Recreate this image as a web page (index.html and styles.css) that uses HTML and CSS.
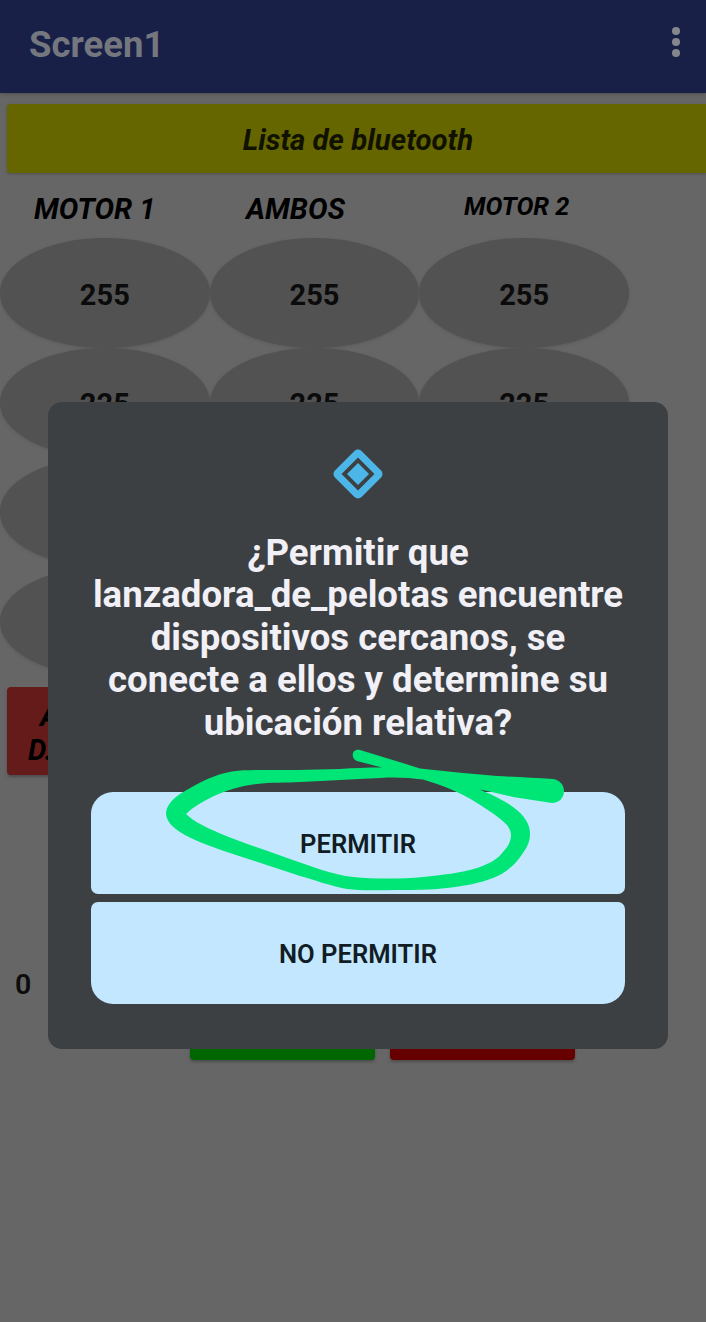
FILE: index.html
```html
<!DOCTYPE html>
<html lang="es">
<head>
<meta charset="utf-8">
<title>Screen1</title>
<link rel="stylesheet" href="styles.css">
</head>
<body>
<div class="screen">
  <header class="appbar">
    <h1 class="appbar-title">Screen1</h1>
    <svg class="menu" width="10" height="32" viewBox="0 0 10 32"><circle cx="5" cy="5" r="4"/><circle cx="5" cy="16" r="4"/><circle cx="5" cy="27" r="4"/></svg>
  </header>
  <main class="content">
    <div class="list-button">Lista de bluetooth</div>
    <div class="labels"><span class="label-one">MOTOR 1</span><span class="label-both">AMBOS</span><span class="label-two">MOTOR 2</span></div>
    <div class="speeds">
      <div class="oval">255</div><div class="oval">255</div><div class="oval">255</div>
      <div class="oval">225</div><div class="oval">225</div><div class="oval">225</div>
      <div class="oval"></div><div class="oval"></div><div class="oval"></div>
      <div class="oval"></div><div class="oval"></div><div class="oval"></div>
    </div>
    <div class="stop"><span class="stop-top">A</span><span>D.</span></div>
    <div class="counter">0</div>
    <div class="actions"><div class="action go"></div><div class="action halt"></div></div>
  </main>

  <section class="dialog">
    <svg class="dialog-icon" width="50" height="50" viewBox="0 0 50 50">
      <path d="M25 5.5 44.5 25 25 44.5 5.5 25Z" fill="none" stroke="#4db6e8" stroke-width="10" stroke-linejoin="round"/>
      <path d="M25 8.5 41.5 25 25 41.5 8.5 25Z" fill="#3d4043"/>
      <path d="M25 14 36 25 25 36 14 25Z" fill="#4db6e8"/>
    </svg>
    <h2 class="question">¿Permitir que<br>lanzadora_de_pelotas encuentre<br>dispositivos cercanos, se<br>conecte a ellos y determine su<br>ubicación relativa?</h2>
    <div class="choices">
      <div class="choice allow">PERMITIR</div>
      <div class="choice deny">NO PERMITIR</div>
    </div>
  </section>

  <svg class="marker" width="706" height="1322" viewBox="0 0 706 1322">
    <path fill="#00e676" d="M360 750 C380 756 400 762 420 768.5 C445 771 470 774 497 776 C515 777 535 778 553 779 C560 780 564 785 564 791 C564 798 559 803 552 803 C539 801 526 799 513 797 C500 794 489 791 474 788.5 C478 789 481 790 483 791 C495 796 505 801 513 807 C525 816 530 824 530 834 C530 842 527 847 523 853 C516 864 506 873 493 878 C480 883 465 886 447 888 C430 890 414 890 397 890 C380 890 362 891 347 889 C330 886 315 880 300 876 C275 868 252 860 230 853 C212 847 192 840 180 832 C171 826 166 820 166 813 C167 804 174 797 185 791 C200 782 216 774 232 771.5 C240 770 247 770.3 255 770 C285 770 310 770 340 769 C354 768 367 767.5 382 767.5 L357 761 C350 758 352 748 360 750Z M423 779.5 C410 778 396 777 380 778 C350 779 330 781 300 782 C285 783 270 782 257 784 C240 786 225 791 212 797 C202 802 193 807 186 814 C194 822 206 827 219 833 C242 843 266 850 290 859 C311 866 333 875 353 877 C375 879 401 879 423 877 C442 875 461 873 477 868 C489 864 498 859 503 852 C508 847 511 841 511 835 C511 831 509 828 507 825 C498 816 488 810 477 803 C460 792 442 785 423 779.5Z"/>
  </svg>
</div>
</body>
</html>
```
FILE: styles.css
```css
* { box-sizing: border-box; }
body { margin: 0; font-family: Roboto, "Liberation Sans", sans-serif; }
.screen { position: relative; width: 706px; height: 1322px; overflow: hidden; background: #666; color: #0c0c0c; }
.appbar { height: 93px; padding: 0 25px 4px 29px; display: flex; align-items: center; justify-content: space-between; background: #192048; box-shadow: 0 1px 3px #4d4d4d; }
.appbar-title { margin: 0; font-size: 36.5px; font-weight: 700; line-height: 42px; color: #75777f; }
.menu { fill: #85878c; margin-bottom: 5px; }
.content { padding-top: 11px; }
.list-button { height: 69px; margin-left: 7px; padding: 3px 0 0 3px; display: flex; align-items: center; justify-content: center; border-radius: 3px 0 0 3px; background: #660; box-shadow: 0 1px 3px #505050; font-size: 29.4px; font-weight: 700; font-style: italic; color: #111100; }
.labels { height: 65px; padding-top: 19px; display: grid; grid-template-columns: 211px 219px 1fr; font-size: 29.2px; font-weight: 700; font-style: italic; line-height: 34px; color: #000; }
.label-one { padding-left: 34px; }
.label-both { padding-left: 35px; }
.label-two { padding-left: 34px; font-size: 25.3px; line-height: 29px; }
.speeds { width: 629px; display: grid; grid-template-columns: repeat(3, 1fr); grid-auto-rows: 109.6px; }
.oval { display: flex; align-items: center; justify-content: center; padding-top: 4px; border-radius: 50%; background: #525252; box-shadow: 0 1px 3px #5a5a5a; font-size: 29px; font-weight: 700; color: #0b0b0b; }
.stop { width: 186px; height: 88px; margin: 11px 0 0 7px; padding: 12px 0 0 21px; border-radius: 4px; background: #661b1b; box-shadow: 0 2px 3px #4d4d4d; display: flex; flex-direction: column; font-size: 29px; font-weight: 700; font-style: italic; line-height: 34px; color: #000; }
.stop-top { padding-left: 12px; }
.counter { padding: 193px 0 0 15px; font-size: 28.5px; line-height: 34px; font-weight: 600; }
.actions { display: flex; gap: 15px; padding: 0 0 0 190px; }
.action { width: 185px; height: 58px; border-radius: 4px; box-shadow: 0 2px 3px #4d4d4d; }
.go { background: #060; }
.halt { background: #600; }
.dialog { position: absolute; left: 48px; top: 402px; width: 620px; height: 647px; padding: 47px 43px 0; border-radius: 14px; background: #3d4043; display: flex; flex-direction: column; align-items: center; }
.dialog-icon { flex: none; }
.question { width: 560px; height: 212px; margin: 33px 0 48px; font-size: 36.6px; font-weight: 700; line-height: 42.4px; text-align: center; white-space: nowrap; color: #f1f0f6; }
.choices { width: 534px; display: flex; flex-direction: column; gap: 8px; }
.choice { height: 102px; display: flex; align-items: center; justify-content: center; padding-top: 2px; background: #c2e7ff; font-size: 25.6px; font-weight: 600; color: #111c24; }
.allow { border-radius: 22px 22px 7px 7px; }
.deny { border-radius: 7px 7px 22px 22px; }
.marker { position: absolute; left: 0; top: 0; pointer-events: none; }
.marker path { fill-rule: evenodd; }
```
